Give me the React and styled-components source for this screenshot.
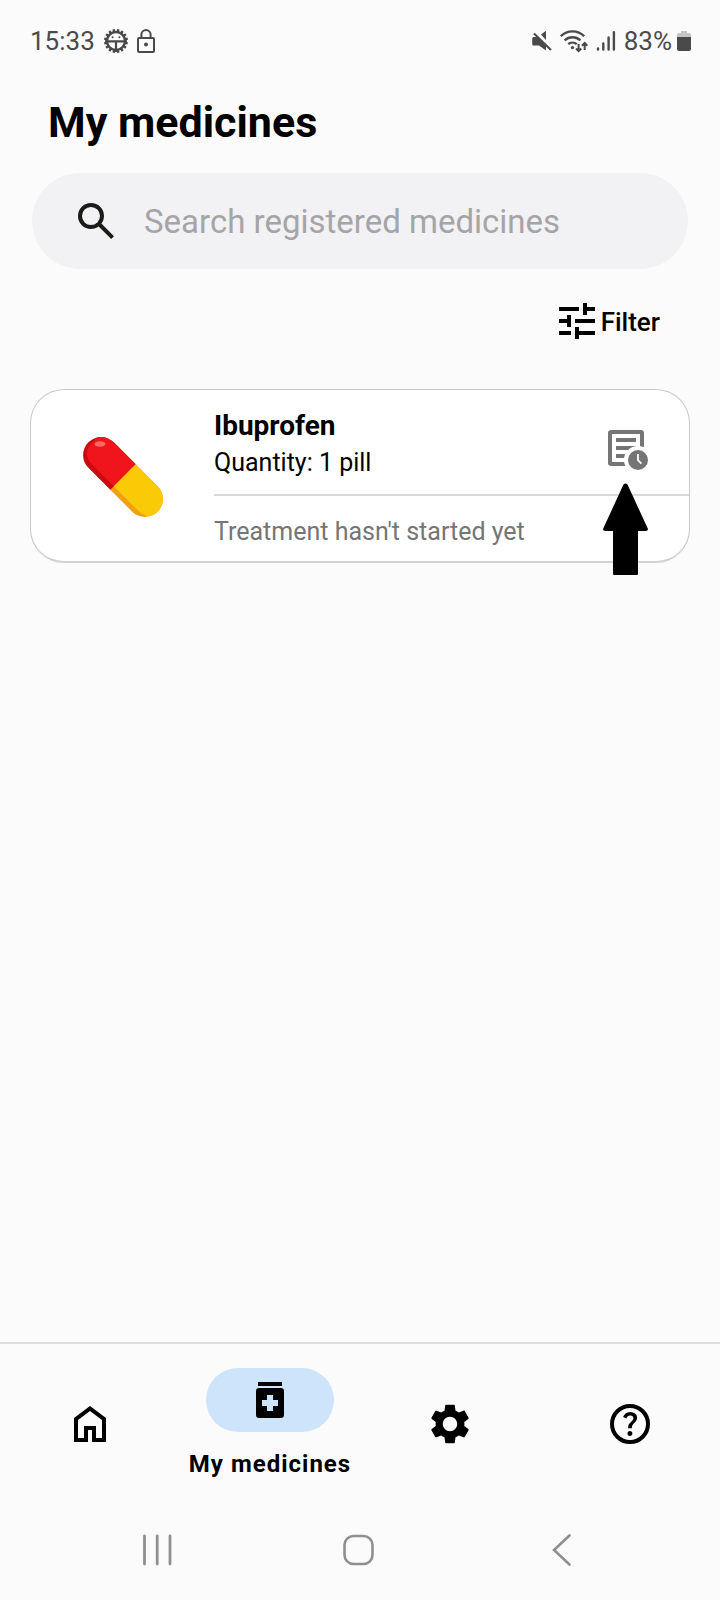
import React from "react";
import styled, { createGlobalStyle } from "styled-components";

const GlobalStyle = createGlobalStyle`
  *, *::before, *::after { box-sizing: border-box; }
  body {
    margin: 0;
    background: #fbfbfb;
    color: #000;
    font-family: Roboto, "Liberation Sans", sans-serif;
  }
  button {
    margin: 0;
    padding: 0;
    border: 0;
    background: none;
    color: inherit;
    font: inherit;
    cursor: pointer;
  }
`;

const Screen = styled.div`
  min-height: 100vh;
  display: flex;
  flex-direction: column;
`;

const StatusBar = styled.header`
  display: flex;
  justify-content: space-between;
  align-items: center;
  height: 82px;
  padding: 0 28px 0 30px;
  color: #4a4a4a;
  font-size: 26px;
  line-height: 32px;
`;

const StatusGroup = styled.div`
  display: flex;
  align-items: center;
  gap: 8px;
`;

const Battery = styled.span`
  display: flex;
  align-items: center;
  gap: 4px;
`;

const Main = styled.main`
  flex: 1;
  display: flex;
  flex-direction: column;
  padding: 14px 30px 0;
`;

const Title = styled.h1`
  margin: 0 0 25px;
  padding: 0 18px;
  font-size: 43px;
  line-height: 52px;
  font-weight: 700;
`;

const SearchBox = styled.label`
  display: flex;
  align-items: center;
  gap: 24px;
  height: 96px;
  margin: 0 2px;
  padding: 0 40px;
  border-radius: 48px;
  background: #f2f2f4;
  color: #1c1b1a;
`;

const SearchInput = styled.input`
  flex: 1;
  min-width: 0;
  padding: 2px 0 0;
  border: 0;
  outline: 0;
  background: none;
  color: #1c1b1a;
  font-family: inherit;
  font-size: 33px;
  line-height: 40px;
  &::placeholder { color: #a5a5a7; opacity: 1; }
`;

const FilterButton = styled.button`
  display: flex;
  align-items: center;
  align-self: flex-end;
  height: 48px;
  margin: 28px 30px 44px 0;
  && {
    font-size: 26px;
    font-weight: 500;
  }
`;

const FilterLabel = styled.span`
  padding-top: 2px;
`;

const Card = styled.article`
  position: relative;
  display: grid;
  grid-template-columns: 183px 1fr;
  border: 1px solid #c9c9cb;
  border-bottom: 2px solid #d2d2d4;
  border-radius: 34px;
  background: #fff;
`;

const Picture = styled.div`
  display: flex;
  align-items: center;
  justify-content: center;
  padding-top: 2px;
`;

const Summary = styled.div`
  display: flex;
  justify-content: space-between;
  align-items: flex-end;
  height: 106px;
  padding: 0 39px 12px 0;
  border-bottom: 2px solid #dadada;
`;

const Name = styled.h2`
  margin: 0;
  font-size: 28px;
  line-height: 36px;
  font-weight: 700;
`;

const Detail = styled.p`
  margin: 0;
  font-size: 25px;
  line-height: 38px;
`;

const TreatmentNote = styled.p`
  display: flex;
  align-items: center;
  height: 65px;
  margin: 0;
  padding-top: 6px;
  color: #757575;
  font-size: 25px;
  line-height: 38px;
`;

const HistoryButton = styled.button`
  display: flex;
  && {
    padding-bottom: 10px;
    color: #757575;
  }
`;

const Pointer = styled.svg`
  position: absolute;
  top: 93px;
  right: 41px;
`;

const TabBar = styled.nav`
  display: grid;
  grid-template-columns: repeat(4, 1fr);
  height: 162px;
  border-top: 2px solid #dcdcdc;
`;

const Tab = styled.button`
  display: flex;
  flex-direction: column;
  align-items: center;
  justify-content: center;
  gap: 16px;
`;

const TabIcon = styled.span`
  display: flex;
  align-items: center;
  justify-content: center;
  width: 128px;
  height: 64px;
  border-radius: 32px;
  background: ${({ $active }) => ($active ? "#cde4fa" : "transparent")};
`;

const TabLabel = styled.span`
  font-size: 24px;
  line-height: 32px;
  font-weight: 700;
  letter-spacing: 1px;
  white-space: nowrap;
`;

const SystemBar = styled.footer`
  display: grid;
  grid-template-columns: repeat(3, 1fr);
  height: 96px;
  padding: 0 57px 4px 56px;
`;

const SystemButton = styled.button`
  display: flex;
  align-items: center;
  justify-content: center;
  && { color: #8f8f8f; }
`;

const Icon = ({ children }) => (
  <svg width="48" height="48" viewBox="0 0 24 24" fill="currentColor" aria-hidden="true">
    {children}
  </svg>
);

const SunGearIcon = () => (
  <svg width="26" height="26" viewBox="0 0 26 26" fill="none" stroke="currentColor" aria-hidden="true">
    <circle cx="13" cy="13" r="9" strokeWidth="2.4" />
    {Array.from({ length: 16 }, (_, i) => (
      <path key={i} d="M13 4V1" strokeWidth="2.4" transform={`rotate(${i * 22.5 + 11.25} 13 13)`} />
    ))}
    <path d="M2 13.4h22M13 13.4V24" strokeWidth="2.2" />
    <circle cx="9.6" cy="9.2" r="1" fill="currentColor" stroke="none" />
    <circle cx="16.4" cy="9.2" r="1" fill="currentColor" stroke="none" />
  </svg>
);

const LockIcon = () => (
  <svg width="18" height="24" viewBox="0 0 18 24" fill="none" stroke="currentColor" strokeWidth="2" aria-hidden="true">
    <rect x="1" y="9" width="16" height="14" rx="1" />
    <path d="M4.4 9V5.6a4.6 4.6 0 0 1 9.2 0V9" />
    <circle cx="9" cy="15.5" r="2" fill="currentColor" stroke="none" />
  </svg>
);

const MuteIcon = () => (
  <svg width="20" height="22" viewBox="0 0 20 22" fill="currentColor" aria-hidden="true">
    <path d="M9 4.6 14 .8V10z" />
    <path d="M1.5 7H5l9 9v4.5L7 15.5H1.5Q.2 15.5 .2 14V8.5Q.2 7 1.5 7z" />
    <path d="M2 3.5 19 20" stroke="currentColor" strokeWidth="2" />
  </svg>
);

const WifiIcon = () => (
  <svg width="28" height="24" viewBox="0 0 28 24" fill="none" stroke="currentColor" strokeWidth="2.4" aria-hidden="true">
    <path d="M.8 7.2a16.5 16.5 0 0 1 23.4 0M4.6 11.4a11.5 11.5 0 0 1 15.8 0M8.2 15.2a6.6 6.6 0 0 1 8.6 0" />
    <circle cx="12.5" cy="18.6" r="1.7" fill="currentColor" stroke="none" />
    <path d="M18.6 15v7M16 19.5l2.6 2.6 2.6-2.6M24.7 21v-7M22 16.7l2.7-2.7 2.7 2.7" strokeWidth="2" />
  </svg>
);

const SignalIcon = () => (
  <svg width="20" height="22" viewBox="0 0 20 22" fill="none" stroke="currentColor" strokeWidth="2.4" strokeLinecap="round" aria-hidden="true">
    <path d="M2 18.5v1M7.3 13.5v6M12.6 7.5v12M17.9 2.2v17.3" />
  </svg>
);

const BatteryIcon = () => (
  <svg width="16" height="22" viewBox="0 0 16 22" fill="currentColor" aria-hidden="true">
    <path d="M5 1h6v2h2Q15 3 15 5v3H1V5q0-2 2-2h2z" opacity=".3" />
    <path d="M1 7h14v12q0 2-2 2H3q-2 0-2-2z" />
  </svg>
);

const SearchIcon = () => (
  <Icon>
    <path d="m19.6 21-6.3-6.3q-.75.6-1.725.95Q10.6 16 9.5 16q-2.725 0-4.612-1.887Q3 12.225 3 9.5q0-2.725 1.888-4.613Q6.775 3 9.5 3t4.613 1.887Q16 6.775 16 9.5q0 1.1-.35 2.075-.35.975-.95 1.725l6.3 6.3ZM9.5 14q1.875 0 3.188-1.312Q14 11.375 14 9.5q0-1.875-1.312-3.188Q11.375 5 9.5 5 7.625 5 6.312 6.312 5 7.625 5 9.5q0 1.875 1.312 3.188Q7.625 14 9.5 14Z" />
  </Icon>
);

const TuneIcon = () => (
  <Icon>
    <path d="M3 17v2h6v-2H3zM3 5v2h10V5H3zm10 16v-2h8v-2h-8v-2h-2v6h2zM7 9v2H3v2h4v2h2V9H7zm14 4v-2H11v2h10zm-6-4h2V7h4V5h-4V3h-2v6z" />
  </Icon>
);

const PillIcon = () => (
  <svg width="82" height="82" viewBox="0 0 82 82" aria-hidden="true">
    <defs>
      <clipPath id="capsule">
        <rect x="-49" y="-18" width="98" height="36" rx="18" transform="translate(41 41) rotate(45)" />
      </clipPath>
    </defs>
    <g clipPath="url(#capsule)">
      <g transform="translate(41 41) rotate(45)">
        <rect x="-52" y="-20" width="53" height="40" fill="#c90a0e" />
        <rect x="0" y="-20" width="52" height="40" fill="#f2a012" />
        <path d="M0-20V13H-31Q-43 13-46 2V-20z" fill="#f0141c" />
        <path d="M0-20H52V5Q45 13 34 13H0z" fill="#f9ca05" />
      </g>
    </g>
    <ellipse cx="18" cy="8" rx="5.5" ry="2.8" fill="#ff6a63" />
  </svg>
);

const HistoryIcon = () => (
  <Icon>
    <path fillRule="evenodd" d="M4.6 3h14.8Q21 3 21 4.6v14.8q0 1.6-1.6 1.6H4.6Q3 21 3 19.4V4.6Q3 3 4.6 3zM5 5v14h14V5z" />
    <path d="M7 7h10v2H7zM7 11h10v2H7zM7 15h7v2H7z" />
    <circle cx="18" cy="18" r="7" fill="#fff" />
    <circle cx="18" cy="18" r="5" />
    <path d="M18 15v3.1l1.7 1.7" fill="none" stroke="#fff" strokeWidth=".9" />
  </Icon>
);

const HomeIcon = () => (
  <Icon>
    <path d="M6 19h3v-6h6v6h3v-9l-6-4.5L6 10v9Zm-2 2V9l8-6 8 6v12h-7v-6h-2v6H4Z" />
  </Icon>
);

const MedicationIcon = () => (
  <Icon>
    <path d="M6 3h12v2H6zM17.4 6H6.6Q5 6 5 7.6v11.8Q5 21 6.6 21h10.8q1.6 0 1.6-1.6V7.6Q19 6 17.4 6zM16 15h-2.5v2.5h-3V15H8v-3h2.5V9.5h3V12H16v3z" />
  </Icon>
);

const SettingsIcon = () => (
  <Icon>
    <path d="M19.14 12.94c.04-.3.06-.61.06-.94 0-.32-.02-.64-.07-.94l2.03-1.58c.18-.14.23-.41.12-.61l-1.92-3.32c-.12-.22-.37-.29-.59-.22l-2.39.96c-.5-.38-1.03-.7-1.62-.94l-.36-2.54c-.04-.24-.24-.41-.48-.41h-3.84c-.24 0-.43.17-.47.41l-.36 2.54c-.59.24-1.13.57-1.62.94l-2.39-.96c-.22-.08-.47 0-.59.22L2.74 8.87c-.12.21-.08.47.12.61l2.03 1.58c-.05.3-.09.63-.09.94s.02.64.07.94l-2.03 1.58c-.18.14-.23.41-.12.61l1.92 3.32c.12.22.37.29.59.22l2.39-.96c.5.38 1.03.7 1.62.94l.36 2.54c.05.24.24.41.48.41h3.84c.24 0 .44-.17.47-.41l.36-2.54c.59-.24 1.13-.56 1.62-.94l2.39.96c.22.08.47 0 .59-.22l1.92-3.32c.12-.22.07-.47-.12-.61l-2.01-1.58zM12 15.6c-1.98 0-3.6-1.62-3.6-3.6s1.62-3.6 3.6-3.6 3.6 1.62 3.6 3.6-1.62 3.6-3.6 3.6z" />
  </Icon>
);

const HelpIcon = () => (
  <Icon>
    <circle cx="12" cy="12" r="9" fill="none" stroke="currentColor" strokeWidth="2" />
    <path d="M11.95 18q.525 0 .888-.363.362-.362.362-.887t-.362-.887q-.363-.363-.888-.363t-.887.363q-.363.362-.363.887t.363.887q.362.363.887.363Zm-.9-3.85h1.85q0-.825.188-1.3.187-.475 1.062-1.3.65-.65 1.025-1.238.375-.587.375-1.412 0-1.4-1.025-2.15Q13.5 6 12.1 6q-1.425 0-2.312.75-.888.75-1.238 1.8l1.65.65q.125-.45.562-.975.438-.525 1.338-.525.8 0 1.2.438.4.437.4.962 0 .5-.3.937-.3.438-.75.813-1.1.975-1.35 1.475-.25.5-.25 1.825Z" />
  </Icon>
);

const SystemIcon = ({ children }) => (
  <svg width="34" height="34" viewBox="0 0 34 34" fill="none" stroke="currentColor" strokeLinecap="round" aria-hidden="true">
    {children}
  </svg>
);

const tabs = [
  { name: "Home", icon: <HomeIcon /> },
  { name: "My medicines", icon: <MedicationIcon />, active: true },
  { name: "Settings", icon: <SettingsIcon /> },
  { name: "Help", icon: <HelpIcon /> },
];

export default function App() {
  return (
    <Screen>
      <GlobalStyle />
      <StatusBar>
        <StatusGroup>
          <span>15:33</span>
          <SunGearIcon />
          <LockIcon />
        </StatusGroup>
        <StatusGroup>
          <MuteIcon />
          <WifiIcon />
          <SignalIcon />
          <Battery>
            <span>83%</span>
            <BatteryIcon />
          </Battery>
        </StatusGroup>
      </StatusBar>

      <Main>
        <Title>My medicines</Title>
        <SearchBox>
          <SearchIcon />
          <SearchInput
            type="text"
            placeholder="Search registered medicines"
            aria-label="Search registered medicines"
          />
        </SearchBox>
        <FilterButton type="button">
          <TuneIcon />
          <FilterLabel>Filter</FilterLabel>
        </FilterButton>

        <Card>
          <Picture>
            <PillIcon />
          </Picture>
          <div>
            <Summary>
              <div>
                <Name>Ibuprofen</Name>
                <Detail>Quantity: 1 pill</Detail>
              </div>
              <HistoryButton type="button" aria-label="Treatment history">
                <HistoryIcon />
              </HistoryButton>
            </Summary>
            <TreatmentNote>Treatment hasn't started yet</TreatmentNote>
          </div>
          <Pointer width="46" height="93" viewBox="0 0 46 93" aria-hidden="true">
            <path d="M21.5 1.5Q23.5-.5 25.5 1.5L46 46Q46 48 43.5 48H36V91Q36 92 34.5 92H12.5Q11 92 11 91V48H3.5Q1 48 1 46z" />
          </Pointer>
        </Card>
      </Main>

      <TabBar aria-label="Main">
        {tabs.map(({ name, icon, active }) => (
          <Tab key={name} type="button" aria-label={name} aria-current={active ? "page" : undefined}>
            <TabIcon $active={active}>{icon}</TabIcon>
            {active && <TabLabel>{name}</TabLabel>}
          </Tab>
        ))}
      </TabBar>

      <SystemBar>
        <SystemButton type="button" aria-label="Recent apps">
          <SystemIcon>
            <path d="M4.5 3v28M17.2 3v28M30 3v28" strokeWidth="2.8" />
          </SystemIcon>
        </SystemButton>
        <SystemButton type="button" aria-label="Home screen">
          <SystemIcon>
            <rect x="2.5" y="3" width="28" height="28" rx="9" strokeWidth="2.6" />
          </SystemIcon>
        </SystemButton>
        <SystemButton type="button" aria-label="Back">
          <SystemIcon>
            <path d="M24.5 2.5 9 17l15.5 14.5" strokeWidth="2.6" />
          </SystemIcon>
        </SystemButton>
      </SystemBar>
    </Screen>
  );
}
